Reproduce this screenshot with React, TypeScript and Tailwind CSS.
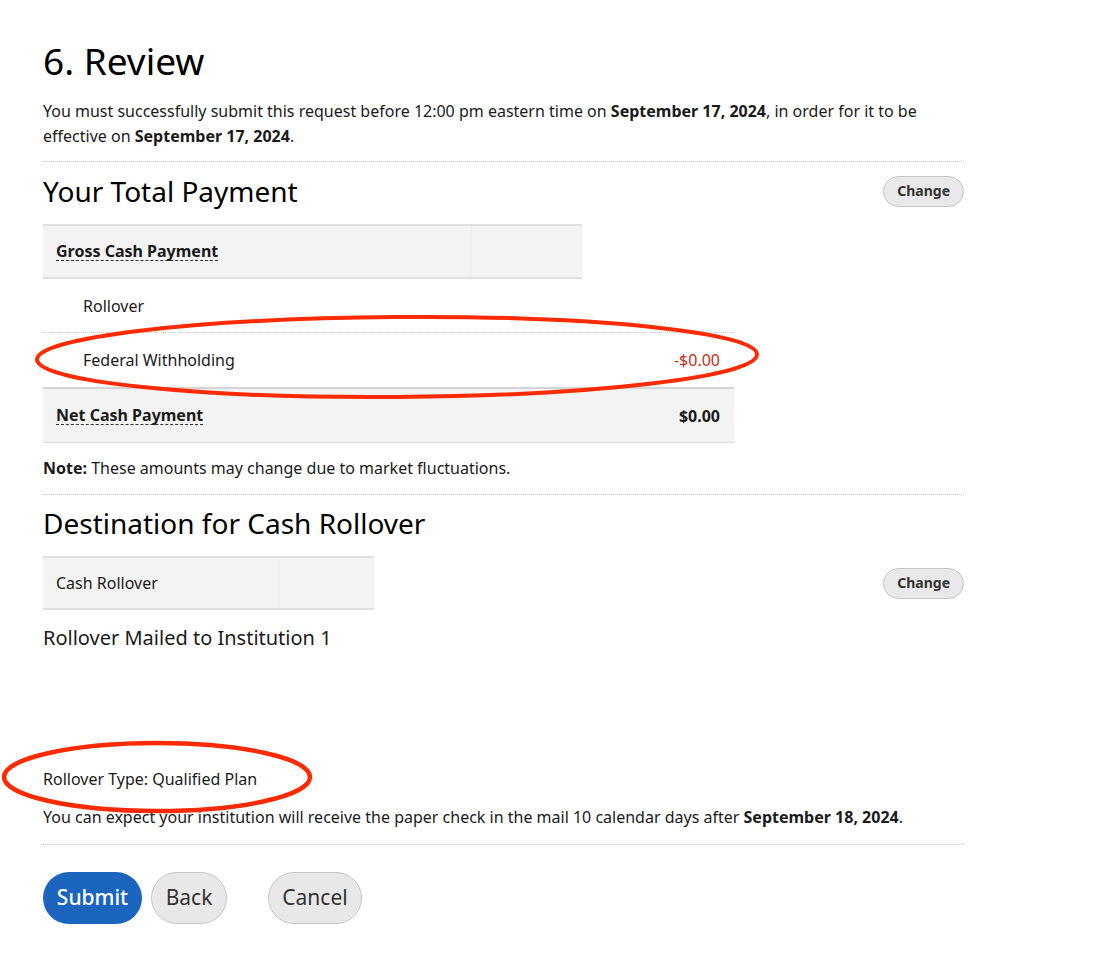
import React from "react";

const font = { fontFamily: "'Noto Sans', Lato, sans-serif" };

function ChangeButton() {
  return (
    <button className="h-[31px] px-[13px] rounded-full bg-[#e9e9e9] border border-[#c4c4c4] text-[14px] font-bold text-[#333] leading-none">
      Change
    </button>
  );
}

function Divider() {
  return <div className="border-t border-dotted border-[#c9c9c9]" />;
}

export default function App() {
  return (
    <div className="relative min-h-[964px] bg-white text-[#1a1a1a]" style={font}>
      <div className="pl-[43px] w-[964px] pt-[36px]">
        <h1 className="text-[37px] leading-[50px] font-normal text-black">6. Review</h1>
        <p className="mt-[13px] text-[16px] leading-[25px]">
          You must successfully submit this request before 12:00 pm eastern time on{" "}
          <span className="font-bold">September 17, 2024</span>, in order for it to be effective on{" "}
          <span className="font-bold">September 17, 2024</span>.
        </p>
        <div className="mt-[12px]">
          <Divider />
        </div>

        <div className="mt-[11px] flex items-center justify-between">
          <h2 className="text-[28px] leading-[36px] text-black">Your Total Payment</h2>
          <ChangeButton />
        </div>

        <div className="mt-[15px] w-[691px]">
          <div className="w-[539px] h-[55px] flex bg-[#f3f3f3] border-y-2 border-[#e0e0e0]">
            <div className="w-[429px] flex items-center pl-[13px] border-r border-[#efefef]">
              <span className="font-bold text-[16px] border-b border-dashed border-[#333] leading-[18px]">
                Gross Cash Payment
              </span>
            </div>
            <div className="flex-1" />
          </div>
          <div className="h-[54px] flex items-center pl-[40px] text-[16px] border-b border-dotted border-[#d0d0d0]">
            Rollover
          </div>
          <div className="h-[54px] flex items-center justify-between pl-[40px] pr-[14px] text-[16px]">
            <span>Federal Withholding</span>
            <span className="text-[#cc2a1a]">-$0.00</span>
          </div>
          <div className="h-[56px] flex items-center justify-between pl-[13px] pr-[14px] bg-[#f3f3f3] border-t-2 border-b border-t-[#d4d4d4] border-b-[#dcdcdc]">
            <span className="font-bold text-[16px] border-b border-dashed border-[#333] leading-[18px]">
              Net Cash Payment
            </span>
            <span className="font-bold text-[16px]">$0.00</span>
          </div>
        </div>

        <p className="mt-[13px] text-[16px] leading-[25px]">
          <span className="font-bold">Note:</span> These amounts may change due to market fluctuations.
        </p>
        <div className="mt-[13px]">
          <Divider />
        </div>

        <h2 className="mt-[10px] text-[28px] leading-[36px] text-black">Destination for Cash Rollover</h2>

        <div className="mt-[15px] flex items-center justify-between">
          <div className="w-[331px] h-[54px] flex bg-[#f3f3f3] border-y-2 border-[#e0e0e0]">
            <div className="w-[237px] flex items-center pl-[13px] border-r border-[#efefef] text-[16px]">
              Cash Rollover
            </div>
            <div className="flex-1" />
          </div>
          <ChangeButton />
        </div>

        <p className="mt-[14px] text-[20px] leading-[28px]">Rollover Mailed to Institution 1</p>

        <p className="mt-[115px] text-[16px] leading-[24px]">Rollover Type: Qualified Plan</p>
        <p className="mt-[14px] text-[16px] leading-[24px]">
          You can expect your institution will receive the paper check in the mail 10 calendar days after{" "}
          <span className="font-bold">September 18, 2024</span>.
        </p>
        <div className="mt-[15px]">
          <Divider />
        </div>

        <div className="mt-[27px] flex items-center">
          <button className="h-[52px] w-[99px] rounded-full bg-[#1b65bf] text-white text-[21px] font-medium">
            Submit
          </button>
          <button className="ml-[9px] h-[52px] w-[76px] rounded-full bg-[#e8e8e8] border border-[#c6c6c6] text-[#333] text-[21px]">
            Back
          </button>
          <button className="ml-[41px] h-[52px] w-[94px] rounded-full bg-[#e8e8e8] border border-[#c6c6c6] text-[#333] text-[21px]">
            Cancel
          </button>
        </div>
      </div>

      <svg className="absolute left-0 top-0 pointer-events-none" width="1094" height="964">
        <ellipse cx="397" cy="357" rx="360" ry="40" fill="none" stroke="#ff2a00" strokeWidth="4" transform="rotate(-0.4 397 357)" />
        <ellipse cx="157" cy="777" rx="153" ry="34" fill="none" stroke="#ff2a00" strokeWidth="4.5" />
      </svg>
    </div>
  );
}
